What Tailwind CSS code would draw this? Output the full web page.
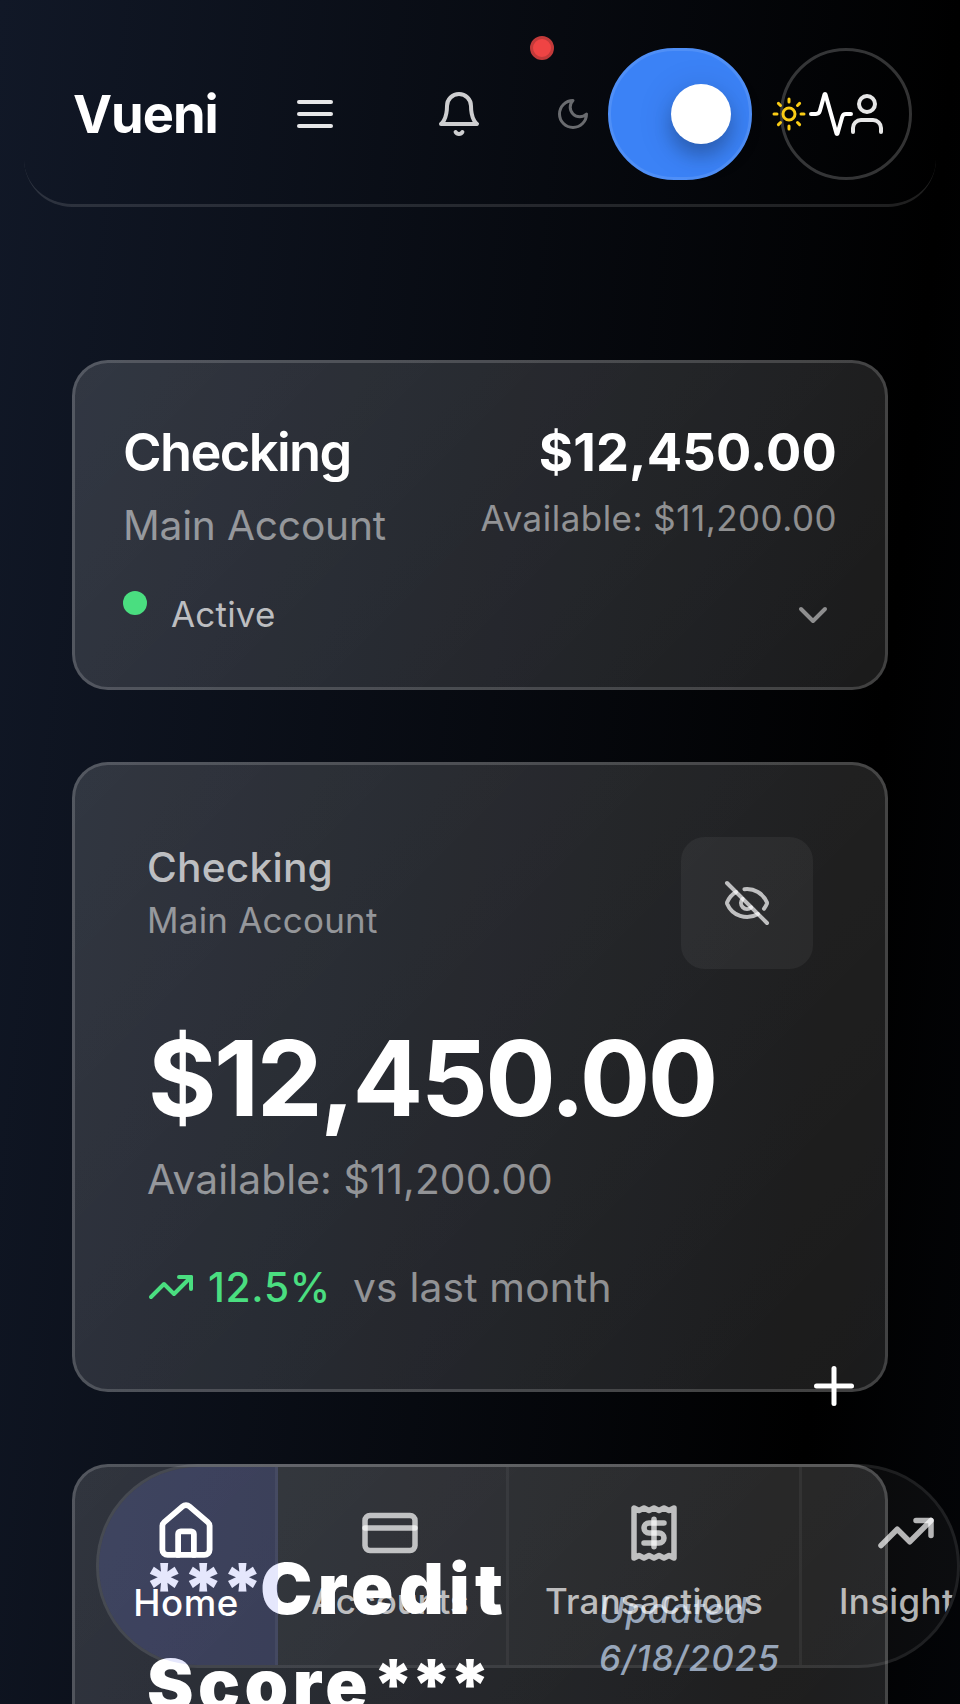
<!DOCTYPE html>
<html lang="en">
<head>
<meta charset="utf-8">
<title>Vueni</title>
<script src="https://cdn.jsdelivr.net/npm/@tailwindcss/browser@4"></script>
</head>
<body class="bg-black">
<div class="relative h-[1704px] w-[960px] overflow-hidden bg-[linear-gradient(to_bottom_right,#111827,#000_50%,#111827)] bg-[length:960px_9000px] bg-no-repeat font-[Inter,sans-serif] text-white">

  <!-- Header -->
  <header class="relative mx-6 mt-6 flex h-[183px] items-center rounded-[48px] border-b-[3px] border-white/12 pl-[49px]">
    <span class="w-[218px] shrink-0 text-[52.4px] leading-[64px] font-bold tracking-[-1px]">Vueni</span>
    <svg class="size-12 shrink-0 text-white/90" viewBox="0 0 24 24" fill="none" stroke="currentColor" stroke-width="2" stroke-linecap="round" stroke-linejoin="round"><path d="M4 6h16"/><path d="M4 12h16"/><path d="M4 18h16"/></svg>
    <svg class="ml-24 size-12 shrink-0 text-white/80" viewBox="0 0 24 24" fill="none" stroke="currentColor" stroke-width="2" stroke-linecap="round" stroke-linejoin="round"><path d="M6 8a6 6 0 0 1 12 0c0 7 3 9 3 9H3s3-2 3-9"/><path d="M10.3 21a1.94 1.94 0 0 0 3.4 0"/></svg>
    <span class="absolute top-3 left-[506px] size-6 rounded-full border-[3px] border-[#c23a3a] bg-[#ef4444]"></span>
    <svg class="ml-[72px] size-9 shrink-0 text-white/40" viewBox="0 0 24 24" fill="none" stroke="currentColor" stroke-width="2" stroke-linecap="round" stroke-linejoin="round"><path d="M12 3a6 6 0 0 0 9 9 9 9 0 1 1-9-9Z"/></svg>
    <div class="ml-[17px] flex h-[132px] w-36 shrink-0 items-center justify-end rounded-[66px] border-[3px] border-[#4f8ff7] bg-[#3b82f6] pr-[18px]">
      <span class="size-[60px] rounded-full bg-white shadow-[0_12px_18px_rgba(0,0,0,0.2),0_6px_36px_rgba(0,0,0,0.15)]"></span>
    </div>
    <svg class="relative z-10 ml-[19px] size-9 shrink-0 text-[#facc15]" viewBox="0 0 24 24" fill="none" stroke="currentColor" stroke-width="2" stroke-linecap="round" stroke-linejoin="round"><circle cx="12" cy="12" r="4"/><path d="M12 2v2"/><path d="M12 20v2"/><path d="m4.93 4.93 1.41 1.41"/><path d="m17.66 17.66 1.41 1.41"/><path d="M2 12h2"/><path d="M20 12h2"/><path d="m6.34 17.66-1.41 1.41"/><path d="m19.07 4.93-1.41 1.41"/></svg>
    <div class="-ml-[27px] flex size-[132px] shrink-0 items-center rounded-full border-[3px] border-white/20 pl-6">
      <svg class="size-12 shrink-0" viewBox="0 0 24 24" fill="none" stroke="currentColor" stroke-width="2" stroke-linecap="round" stroke-linejoin="round"><path d="M22 12h-2.48a2 2 0 0 0-1.93 1.46l-2.35 8.36a.25.25 0 0 1-.48 0L9.24 2.18a.25.25 0 0 0-.48 0l-2.35 8.36A2 2 0 0 1 4.49 12H2"/></svg>
      <svg class="-ml-3 size-12 shrink-0 text-white/90" viewBox="0 0 24 24" fill="none" stroke="currentColor" stroke-width="2" stroke-linecap="round" stroke-linejoin="round"><path d="M19 21v-2a4 4 0 0 0-4-4H9a4 4 0 0 0-4 4v2"/><circle cx="12" cy="7" r="4"/></svg>
    </div>
  </header>

  <main class="mx-[72px] mt-[153px] flex flex-col gap-[72px]">
    <!-- Account summary -->
    <section class="h-[330px] shrink-0 rounded-[36px] border-[3px] border-white/17 bg-[linear-gradient(135deg,rgba(255,255,255,0.15),rgba(255,255,255,0.105))] bg-origin-border px-12 pt-[55px]">
      <div class="flex h-[133px] justify-between">
        <div>
          <h3 class="text-[52.4px] leading-[68px] font-semibold tracking-[-1.6px]">Checking</h3>
          <p class="mt-[14px] text-[40.7px] leading-[52px] tracking-[-0.2px] text-white/50">Main Account</p>
        </div>
        <div class="text-right">
          <p class="text-[52.4px] leading-[68px] font-bold tracking-[0.15px]">$12,450.00</p>
          <p class="mt-[10px] text-[34.9px] leading-[44px] tracking-[0.52px] text-white/50">Available: $11,200.00</p>
        </div>
      </div>
      <div class="mt-10 flex h-12 items-start">
        <span class="size-6 rounded-full bg-[#4ade80]"></span>
        <span class="ml-6 text-[34.9px] leading-[46px] tracking-[0.25px] text-white/70">Active</span>
        <svg class="mr-0 ml-auto size-12 text-white/50" viewBox="0 0 24 24" fill="none" stroke="currentColor" stroke-width="2" stroke-linecap="round" stroke-linejoin="round"><path d="m6 9 6 6 6-6"/></svg>
      </div>
    </section>

    <!-- Balance -->
    <section class="h-[630px] shrink-0 rounded-[36px] border-[3px] border-white/17 bg-[linear-gradient(135deg,rgba(255,255,255,0.15),rgba(255,255,255,0.105))] bg-origin-border px-[72px] pt-[72px]">
      <div class="flex h-[132px] justify-between">
        <div class="pt-1">
          <h3 class="text-[40.7px] leading-[54px] font-medium tracking-[0.2px] text-white/70">Checking</h3>
          <p class="mt-[3px] text-[34.9px] leading-[44px] tracking-[0.26px] text-white/50">Main Account</p>
        </div>
        <div class="flex size-[132px] items-center justify-center rounded-3xl bg-white/5">
          <svg class="size-12 text-white/70" viewBox="0 0 24 24" fill="none" stroke="currentColor" stroke-width="2" stroke-linecap="round" stroke-linejoin="round"><path d="M10.733 5.076a10.744 10.744 0 0 1 11.205 6.575 1 1 0 0 1 0 .696 10.747 10.747 0 0 1-1.444 2.49"/><path d="M14.084 14.158a3 3 0 0 1-4.242-4.242"/><path d="M17.479 17.499a10.75 10.75 0 0 1-15.417-5.151 1 1 0 0 1 0-.696 10.75 10.75 0 0 1 4.446-5.143"/><path d="m2 2 20 20"/></svg>
        </div>
      </div>
      <p class="mt-[55px] ml-px text-[104.7px] leading-[108px] font-bold tracking-[-2.5px]">$12,450.00</p>
      <p class="mt-[18px] text-[40.7px] leading-[60px] tracking-[0.13px] text-white/50">Available: $11,200.00</p>
      <div class="mt-[47px] flex h-[60px] items-center text-[40.7px]">
        <svg class="size-12 text-[#4ade80]" viewBox="0 0 24 24" fill="none" stroke="currentColor" stroke-width="2" stroke-linecap="round" stroke-linejoin="round"><path d="M22 7 13.5 15.5 8.5 10.5 2 17"/><path d="M16 7h6v6"/></svg>
        <span class="ml-[13px] w-[145px] pt-0.5 leading-[60px] font-medium tracking-[0.7px] text-[#4ade80]">12.5%</span>
        <span class="pt-0.5 leading-[60px] tracking-[0.2px] text-white/50">vs last month</span>
      </div>
    </section>

    <!-- Credit score -->
    <section class="flex h-[600px] shrink-0 rounded-[36px] border-[3px] border-white/17 bg-[linear-gradient(135deg,rgba(255,255,255,0.15),rgba(255,255,255,0.105))] bg-origin-border pl-[68px] pt-[74px]">
      <h2 class="flex w-[456px] flex-col text-[69.8px] leading-[96px] font-black"><span class="tracking-[5.3px]"><span class="tracking-[-3.4px]">***</span>Credit</span><span class="pl-1 tracking-[4.5px]">Score<span class="tracking-[-4.2px]">***</span></span></h2>
      <p class="mt-[45px] text-[34.9px] leading-[48px] font-medium tracking-[0.7px] text-[#94a3b8] italic">Updated<br><span class="tracking-[1.1px]">6/18/2025</span></p>
    </section>
  </main>

  <!-- Floating action button -->
  <button class="absolute top-[1356px] left-[804px]" aria-label="Add">
    <svg class="size-[60px]" viewBox="0 0 24 24" fill="none" stroke="currentColor" stroke-width="2" stroke-linecap="round" stroke-linejoin="round"><path d="M5 12h14"/><path d="M12 5v14"/></svg>
  </button>

  <!-- Bottom navigation -->
  <nav class="absolute top-[1464px] left-24 flex h-[204px] w-[864px] overflow-hidden rounded-[102px] border-[3px] border-white/8 bg-white/4 text-[34.9px] leading-[48px] font-medium text-white/70">
    <a class="w-[179px] shrink-0 border-r-[3px] border-white/5 bg-[#6270f0]/17 pr-0.5 text-white">
      <span class="flex h-[198px] scale-105 flex-col items-center gap-[14px] pt-9">
        <svg class="size-[60px]" viewBox="0 0 24 24" fill="none" stroke="currentColor" stroke-width="2.2" stroke-linecap="round" stroke-linejoin="round"><path d="M15 21v-8a1 1 0 0 0-1-1h-4a1 1 0 0 0-1 1v8"/><path d="M3 10a2 2 0 0 1 .709-1.528l7-5.999a2 2 0 0 1 2.582 0l7 5.999A2 2 0 0 1 21 10v9a2 2 0 0 1-2 2H5a2 2 0 0 1-2-2z"/></svg>
        <span class="tracking-[0.5px]">Home</span>
      </span>
    </a>
    <a class="flex w-[231px] shrink-0 flex-col items-center gap-[14px] border-r-[3px] border-white/5 pt-9 pr-1">
      <svg class="size-[60px]" viewBox="0 0 24 24" fill="none" stroke="currentColor" stroke-width="2.2" stroke-linecap="round" stroke-linejoin="round"><rect width="20" height="14" x="2" y="5" rx="2"/><path d="M2 10h20"/></svg>
      <span class="tracking-[-0.1px]">Accounts</span>
    </a>
    <a class="flex w-[293px] shrink-0 flex-col items-center gap-[14px] border-r-[3px] border-white/5 pt-9">
      <svg class="size-[60px]" viewBox="0 0 24 24" fill="none" stroke="currentColor" stroke-width="2.2" stroke-linecap="round" stroke-linejoin="round"><path d="M4 2v20l2-1 2 1 2-1 2 1 2-1 2 1 2-1 2 1V2l-2 1-2-1-2 1-2-1-2 1-2-1-2 1Z"/><path d="M16 8h-6a2 2 0 1 0 0 4h4a2 2 0 1 1 0 4H8"/><path d="M12 17.5v-11"/></svg>
      <span class="tracking-[0.24px]">Transactions</span>
    </a>
    <a class="flex w-[208px] shrink-0 flex-col items-center gap-[14px] pt-9">
      <svg class="size-[60px]" viewBox="0 0 24 24" fill="none" stroke="currentColor" stroke-width="2.2" stroke-linecap="round" stroke-linejoin="round"><path d="M22 7 13.5 15.5 8.5 10.5 2 17"/><path d="M16 7h6v6"/></svg>
      <span class="tracking-[0.4px]">Insights</span>
    </a>
  </nav>
</div>
</body>
</html>
